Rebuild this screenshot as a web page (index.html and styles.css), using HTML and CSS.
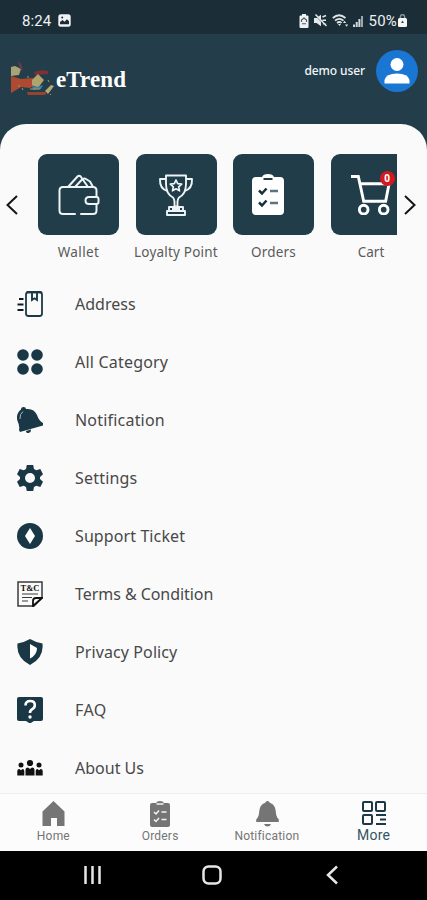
FILE: index.html
```html
<!DOCTYPE html>
<html lang="en">

<head>
  <meta charset="UTF-8" />
  <meta name="viewport" content="width=device-width, initial-scale=1" />
  <title>eTrend</title>
  <link rel="stylesheet" href="styles.css">
</head>

<body>
  <div class="status-bar">
    <div class="status-left">
      <span class="time">8:24</span>
      <svg width="13" height="13" viewBox="0 0 13 13"><rect x="0.3" y="0.3" width="12.4" height="12.4" rx="2.5" fill="#f0f2f5"/><path d="M2 10.3V8l2.500-2 2 1.800L9 5.200l2 2v3.100z" fill="#1b2d37"/><circle cx="4.200" cy="3.600" r="1" fill="#1b2d37"/></svg>
    </div>
    <div class="status-right">
      <svg class="s-battery" width="10" height="14" viewBox="0 0 10 14"><path d="M3 0h4v1.500h1.500q1 0 1 1V13q0 1-1 1h-7q-1 0-1-1V2.500q0-1 1-1H3z" fill="#eef1f3"/><path d="M2.500 8V6L5 4l2.500 2v2M3 9.800h4" fill="none" stroke="#4a5962" stroke-width="1.100"/></svg>
      <svg class="s-mute" width="13" height="13" viewBox="0 0 13 13"><path d="M0 4h2.500L7 .8v11.400L2.500 9H0z" fill="#e5e9eb"/><path d="M.5.500l11.500 12" stroke="#1b2d37" stroke-width="1"/><path d="M1.500.500l11 11.500M8.500 3l3.500-1.500M8.500 6.200H12M9 9.500l3 1" fill="none" stroke="#e5e9eb" stroke-width="1.500"/></svg>
      <svg class="s-wifi" width="17" height="14" viewBox="0 0 17 14"><g fill="none" stroke="#dfe4e7" stroke-width="1.700"><path d="M.8 4Q7 -1.500 13.500 4M3 6.600Q7.200 3 11.500 6.600M5 9Q7.500 7 9.500 9"/></g><path d="M6 10h3l-1.500 2zM11 9l1.600-2.200L14.200 9zM13 10.500h3.200l-1.600 2.300z" fill="#dfe4e7"/></svg>
      <svg class="s-signal" width="10" height="12" viewBox="0 0 10 12"><path d="M0 12V9.500h2V12zM2.700 12V7h2v5zM5.400 12V4h2v8z" fill="#d3dade"/><path d="M8 12V1h2v11z" fill="#9aa7ad"/></svg>
      <span class="percent">50%</span>
      <svg width="9" height="13" viewBox="0 0 9 13"><path d="M2.400 5V2.800a2.100 2.100 0 0 1 4.200 0V5" fill="none" stroke="#87949b" stroke-width="1.500"/><rect y="4" width="9" height="9" rx="1.500" fill="#f4f6f7"/><path d="M4.500 6.500L6 9H3z" fill="#384a54"/></svg>
    </div>
  </div>

  <header class="header">
    <div class="brand">
      <svg width="46" height="40" viewBox="0 0 46 40"><path d="M1 16l10 3 12-1 4 6-7 4-9-1-10 6z" fill="#ae4a32"/><path d="M1 7l4-1 6 3-2 6-8 1z" fill="#a8a477"/><path d="M8 1l3 3 2 7-3-2z" fill="#713943"/><path d="M24 12q7-3 14-1v3l-13 1z" fill="#7d3037"/><path d="M22 20l6-6 6 6-6 8-6-3z" fill="#b1a36c"/><path d="M22 26q5 2 11-1l-2 4-8 1z" fill="#3985a8"/><path d="M35 31l6-6 3 1-6 8z" fill="#b8a878"/><path d="M17 32h20l-2 3H18z" fill="#974332"/><path d="M20 29h10M12 28l1 2M8 26h2M38 20l1 2M40 34l1 1M18 18v-2" stroke="#b29651" stroke-width="1"/></svg>
      <span class="brand-name">eTrend</span>
    </div>
    <div class="user">
      <span class="user-name">demo user</span>
      <span class="avatar">
        <svg width="26" height="26" viewBox="0 0 26 26" fill="#fff"><circle cx="13" cy="6.500" r="6.500"/><path d="M.5 25.500V22Q2 15.500 13 15.500T25.500 22v3.500z"/></svg>
      </span>
    </div>
  </header>

  <main class="sheet">
    <section class="carousel">
      <svg class="arrow" width="12" height="20" viewBox="0 0 12 20"><path d="M11 1L1.500 10 11 19"/></svg>
      <div class="tiles">
        <div class="tile">
          <div class="tile-box">
            <svg width="42" height="42" viewBox="0 0 42 42" fill="none" stroke="#eef3f5" stroke-width="2" stroke-linecap="round" stroke-linejoin="round"><path d="M17 40H5q-3.500 0-3.500-3.500V16.500Q1.500 13 5 13h30q3.500 0 3.500 3.500V23M23 40h12q3.500 0 3.500-3.500V30"/><path d="M31 23h7.500q2 0 2 2v3q0 2-2 2H31q-3.500 0-3.500-3.500T31 23zM10 13L19.500 2.500q1.500-1.700 3.200 0L30 13M17 13l7.500-8M25 5q1.500-1 3 0l4 2.500 3 5.500"/></svg>
          </div>
          <span class="tile-label wallet">Wallet</span>
        </div>
        <div class="tile">
          <div class="tile-box">
            <svg width="36" height="42" viewBox="0 0 36 42" fill="none" stroke="#eef3f5" stroke-width="1.900" stroke-linejoin="round"><path d="M8 1.500h20V10q0 10-7 13.500-1.500 2-1.500 4v5h-3v-5q0-2-1.500-4Q8 20 8 10z"/><path d="M8 5H2q-.5 10 7.500 12M28 5h6q.5 10-7.500 12M11 33h14v4H11zM9 37h18v4H9z"/><path d="M18 6l1.700 3.600 4 .5-3 2.700.8 4-3.500-2-3.500 2 .8-4-3-2.700 4-.5z" stroke-width="1.700"/><path d="M14 35h8" /></svg>
          </div>
          <span class="tile-label loyalty">Loyalty Point</span>
        </div>
        <div class="tile">
          <div class="tile-box">
            <svg class="clip-large" width="32" height="42" viewBox="0 0 32 42"><path d="M4 3h6q1-3 6-3t6 3h6q4 0 4 4v30q0 4-4 4H4q-4 0-4-4V7q0-4 4-4z" fill="#fff"/><path d="M11.500 5h9" stroke="#1e3b48" stroke-width="2.200"/><path d="M7 16.500l3 3 4.500-5M7 28.500l3 3 4.500-5" fill="none" stroke="#172f3b" stroke-width="2.500"/><path d="M18 17h8M18 29h8" stroke="#5e737d" stroke-width="2.300"/></svg>
          </div>
          <span class="tile-label orders">Orders</span>
        </div>
        <div class="tile">
          <div class="tile-box">
            <svg class="cart" width="41" height="41" viewBox="0 0 42 42" fill="none" stroke="#fff" stroke-width="3"><path d="M0 2.500h7.500L13 28h22.500L39 10H9"/><circle cx="13" cy="36.500" r="4.400"/><circle cx="33.500" cy="36.500" r="4.400"/></svg>
            <span class="cart-count">0</span>
          </div>
          <span class="tile-label cart-label">Cart</span>
        </div>
      </div>
      <svg class="arrow" width="12" height="20" viewBox="0 0 12 20"><path d="M1 1l9.500 9L1 19"/></svg>
    </section>

    <ul class="menu">
      <li>
        <svg class="icon" viewBox="0 0 26 26" fill="none" stroke="#1d3947"><rect x="9" y="1" width="16" height="24" rx="2.500" stroke-width="1.800"/><path d="M9.500 1.300h15" stroke-width="2.200"/><path d="M15 1.500V9l2.500-1.700L20 9V1.500" stroke-width="1.900"/><path d="M2 8h4.500M.5 13.500h6M.5 19h6" stroke="#101a20" stroke-width="2"/></svg>
        <span class="l-address">Address</span>
      </li>
      <li>
        <svg class="icon" viewBox="0 0 26 26" fill="#193744"><circle cx="6" cy="6" r="5.800"/><circle cx="20" cy="6" r="5.800"/><circle cx="6" cy="20" r="5.800"/><circle cx="20" cy="20" r="5.800"/></svg>
        <span class="l-category">All Category</span>
      </li>
      <li>
        <svg class="icon" viewBox="0 0 26 26" fill="#193744"><path d="M4 2.500Q4 0 6.500 0T9 2q8-1 11 6 2 6 6 8v2.500L3 25l-1-2q1-4-1.500-9Q-1.500 7 4 2.500z"/><path d="M9 24l5-1.500q0 3-2.500 3.500T9 24z"/><path d="M3 12Q2.500 7 6 4.500" fill="none" stroke="#a9b8bf" stroke-width="1"/></svg>
        <span class="l-notification">Notification</span>
      </li>
      <li>
        <svg class="icon" viewBox="0 0 26 26"><path fill="#193744" fill-rule="evenodd" d="M9.800 0h6.400l.8 4 2.300 1.300 4-1.300L26 9.200 23 12v2l3 2.800-2.700 5.200-4-1.300L17 22l-.8 4H9.800L9 22l-2.300-1.300-4 1.300L0 16.800 3 14v-2L0 9.200 2.700 4l4 1.300L9 4zM13 8a5 5 0 1 0 0 10 5 5 0 1 0 0-10z"/></svg>
        <span class="l-settings">Settings</span>
      </li>
      <li>
        <svg class="icon" viewBox="0 0 26 26"><circle cx="13" cy="13" r="13" fill="#193744"/><path d="M13 5l5 8-5 8-5-8z" fill="#fff"/></svg>
        <span class="l-support">Support Ticket</span>
      </li>
      <li>
        <svg class="icon" viewBox="0 0 26 26" fill="none" stroke="#3b3b3b"><path d="M1 1h24v16l-8 8H1z" stroke-width="1.500"/><path d="M25 17h-6q-3 0-3 3v5z" stroke="#111" stroke-width="1.800"/><path d="M5 13h16M5 16.500h10M5 20h6" stroke-width="1.200"/><text class="tc" x="13" y="9.800" text-anchor="middle">T&amp;C</text></svg>
        <span class="l-terms">Terms &amp; Condition</span>
      </li>
      <li>
        <svg class="icon" viewBox="0 0 26 26"><path d="M13 0q6 3.500 12.500 4.500Q27 19 13 26-1 19 .5 4.500 7 3.500 13 0z" fill="#193744"/><path d="M13 5l7 4q0 7-7 10.500z" fill="#fff"/></svg>
        <span class="l-privacy">Privacy Policy</span>
      </li>
      <li>
        <svg class="icon" viewBox="0 0 26 26"><path d="M2 0h22q2 0 2 2v20q0 2-2 2h-7l-4 2.500L9 24H2q-2 0-2-2V2q0-2 2-2z" fill="#193744"/><path d="M8.500 8.500q0-4.500 4.700-4.500t4.600 4.200q0 2.500-2.500 4T13 16" fill="none" stroke="#fff" stroke-width="2.600"/><circle cx="13" cy="20" r="1.700" fill="#fff"/></svg>
        <span class="l-faq">FAQ</span>
      </li>
      <li>
        <svg class="icon" viewBox="0 0 26 26" fill="#111"><circle cx="13" cy="8" r="3.100"/><circle cx="4" cy="10" r="2.500"/><circle cx="22" cy="10" r="2.500"/><path d="M8.500 20.500V15q0-2.500 2.500-2.500l2 1.500 2-1.500q2.500 0 2.500 2.500v5.500zM.3 20.500V16q0-2 2-2L4 15.200 5.500 14q1.800 0 1.800 2v4.500zM18.700 20.500V16q0-2 1.800-2l1.500 1.200 1.700-1.200q2 0 2 2v4.500z"/></svg>
        <span class="l-about">About Us</span>
      </li>
    </ul>
  </main>

  <nav class="tabs">
    <div class="tab">
      <svg width="24" height="26" viewBox="0 0 24 26"><path d="M12.500 0l11 10.500V25h-7.500v-8h-6v8H1.500V10.500z" fill="#757575"/></svg>
      <span class="t-home">Home</span>
    </div>
    <div class="tab">
      <svg width="20" height="26" viewBox="0 0 20 26"><path d="M2 2h4q1-2 4-2t4 2h4q2 0 2 2v20q0 2-2 2H2q-2 0-2-2V4q0-2 2-2z" fill="#757575"/><path d="M6.500 3h7M4 11l2 2 3-3.500M4 18.500l2 2L9 17M11.500 11h5M11.500 18.500h5" fill="none" stroke="#f5f5f5" stroke-width="1.500"/></svg>
      <span class="t-orders">Orders</span>
    </div>
    <div class="tab">
      <svg width="24" height="26" viewBox="0 0 24 26"><path d="M12.500 0q1.800 0 2.300 1.800 5.700 2 6 8.700.2 5.500 3 8V21H1.200v-2.500q2.800-2.500 3-8 .3-6.700 6-8.700Q10.700 0 12.500 0zM9 23h7q-1 2.500-3.500 2.500T9 23z" fill="#757575"/></svg>
      <span class="t-notification">Notification</span>
    </div>
    <div class="tab active">
      <svg width="24" height="24" viewBox="0 0 24 24" fill="none" stroke="#1d3947" stroke-width="2"><rect x="1" y="1" width="9" height="9" rx="1"/><rect x="14" y="1" width="9" height="9" rx="1"/><rect x="1" y="14" width="9" height="9" rx="1"/><path d="M14 14h10M18 18.500h6M14 23h10"/></svg>
      <span class="t-more">More</span>
    </div>
  </nav>

  <div class="system-nav">
    <svg width="17" height="20" viewBox="0 0 17 20"><path d="M1.500 1v18M8.500 1v18M15.500 1v18"/></svg>
    <svg width="20" height="20" viewBox="0 0 20 20"><rect x="1.500" y="1.500" width="17" height="17" rx="5"/></svg>
    <svg width="12" height="20" viewBox="0 0 12 20"><path d="M11 1.500L2 10l9 8.500"/></svg>
  </div>
</body>

</html>
```
FILE: styles.css
```css
* {
  box-sizing: border-box;
}

body {
  margin: 0;
  height: 900px;
  display: flex;
  flex-direction: column;
  overflow: hidden;
  background: #233e4a;
  font-family: "Noto Sans", "Open Sans", sans-serif;
  color: #484848;
}

svg {
  display: block;
  flex: none;
}

.status-bar {
  height: 34px;
  flex: none;
  display: flex;
  justify-content: space-between;
  padding: 7px 20px 0 22px;
  background: #1b2d37;
  color: #eef1f3;
  font-family: Roboto, sans-serif;
  font-size: 15px;
}

.status-left,
.status-right {
  display: flex;
  align-items: center;
  height: 27px;
}

.status-left {
  gap: 7px;
}

.time {
  letter-spacing: 0.1px;
}

.s-battery {
  margin-right: 5px;
}

.s-mute {
  margin-right: 5px;
}

.s-wifi {
  margin-right: 4px;
}

.s-signal {
  margin-right: 6px;
}

.percent {
  margin-right: 1px;
  letter-spacing: 0.2px;
}

.header {
  height: 90px;
  flex: none;
  display: flex;
  justify-content: space-between;
  padding: 15px 9px 0 10px;
}

.brand {
  display: flex;
  align-items: center;
  height: 62px;
}

.brand-name {
  color: #fff;
  font: bold 23px "Liberation Serif", serif;
  letter-spacing: 0.1px;
}

.user {
  display: flex;
  align-items: center;
  gap: 11px;
  height: 43px;
}

.user-name {
  color: #f3f6f7;
  font-size: 12px;
  font-weight: 500;
  letter-spacing: -0.1px;
}

.avatar {
  width: 42px;
  height: 42px;
  border-radius: 50%;
  background: #1976d2;
  display: flex;
  align-items: center;
  justify-content: center;
}

.sheet {
  flex: 1;
  min-height: 0;
  overflow: hidden;
  padding-top: 30px;
  border-radius: 26px 26px 0 0;
  background: #fafafa;
}

.carousel {
  height: 121px;
  display: flex;
  justify-content: space-between;
  padding: 0 11px 0 6px;
}

.arrow {
  margin-top: 41px;
  fill: none;
  stroke: #151515;
  stroke-width: 2;
}

.tiles {
  width: 367px;
  margin-left: 5px;
  display: flex;
  gap: 0.5px;
  overflow: hidden;
}

.tile {
  width: 97px;
  flex: none;
  display: flex;
  flex-direction: column;
  align-items: center;
}

.tile-box {
  position: relative;
  width: 81px;
  height: 81px;
  display: flex;
  align-items: center;
  justify-content: center;
  border-radius: 9px;
  background: #203d49;
}

.tile-label {
  margin-top: 8px;
  font-size: 13.5px;
  line-height: 18px;
  white-space: nowrap;
  color: #5a5a5a;
}

.wallet {
  letter-spacing: 0.4px;
}

.loyalty {
  letter-spacing: 0.2px;
}

.orders {
  letter-spacing: 0.2px;
}

.clip-large {
  margin-right: 11px;
}

.cart-count {
  position: absolute;
  top: 17px;
  left: 49px;
  width: 15px;
  height: 15px;
  border-radius: 50%;
  background: #d3191e;
  color: #fff;
  font-size: 10px;
  font-weight: bold;
  line-height: 15px;
  text-align: center;
}

.menu {
  list-style: none;
  margin: 0;
  padding: 0 17px;
  font-size: 16px;
}

.menu li {
  height: 58px;
  display: flex;
  align-items: center;
  gap: 32px;
}

.l-category,
.l-notification,
.l-settings {
  letter-spacing: 0.2px;
}

.l-support,
.l-privacy {
  letter-spacing: 0.1px;
}

.l-terms {
  letter-spacing: -0.05px;
}

.l-faq {
  letter-spacing: 0.4px;
}

.icon {
  width: 26px;
  height: 26px;
}

.tc {
  font: bold 8.5px "Liberation Serif", serif;
  fill: #111;
  stroke: none;
}

.tabs {
  height: 58px;
  flex: none;
  display: grid;
  grid-template-columns: repeat(4, 1fr);
  border-top: 1px solid #eee;
  background: #fcfcfc;
}

.tab {
  display: flex;
  flex-direction: column;
  align-items: center;
  padding-top: 7px;
  font-family: Roboto, sans-serif;
  font-size: 12px;
  line-height: 16px;
  color: #757575;
}

.tab span {
  margin-top: 1px;
  letter-spacing: 0.2px;
}

.tab.active {
  font-size: 14px;
  color: #355565;
}

.tab.active span {
  margin-top: 2px;
}

.system-nav {
  height: 49px;
  flex: none;
  display: grid;
  grid-template-columns: 120px 120px 120px;
  justify-content: start;
  justify-items: center;
  padding: 14px 0 0 32px;
  background: #000;
}

.system-nav svg {
  fill: none;
  stroke: #e6e6e6;
  stroke-width: 2.5;
}
```
